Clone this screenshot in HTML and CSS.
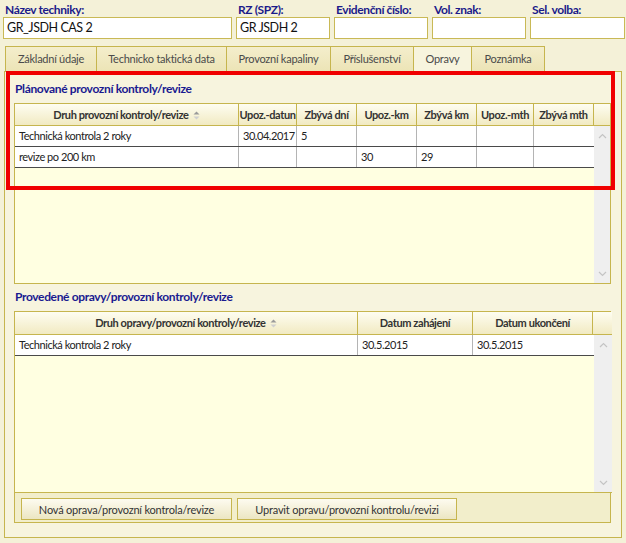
FILE: index.html
```html
<!DOCTYPE html>
<html lang="cs">
<head>
<meta charset="utf-8">
<title>Opravy</title>
<link rel="stylesheet" href="styles.css">
</head>
<body>
<div class="fields">
  <div class="field f-name">
    <label>Název techniky:</label>
    <div class="input">GR_JSDH CAS 2</div>
  </div>
  <div class="field f-small">
    <label>RZ (SPZ):</label>
    <div class="input">GR JSDH 2</div>
  </div>
  <div class="field f-small">
    <label>Evidenční číslo:</label>
    <div class="input"></div>
  </div>
  <div class="field f-small">
    <label>Vol. znak:</label>
    <div class="input"></div>
  </div>
  <div class="field f-last">
    <label>Sel. volba:</label>
    <div class="input"></div>
  </div>
</div>

<div class="tabs">
  <div class="tab t1">Základní údaje</div>
  <div class="tab t2">Technicko taktická data</div>
  <div class="tab t3">Provozní kapaliny</div>
  <div class="tab t4">Příslušenství</div>
  <div class="tab t5 active">Opravy</div>
  <div class="tab t6">Poznámka</div>
</div>

<div class="panel">
  <div class="highlight"></div>
  <h2 class="section-title">Plánované provozní kontroly/revize</h2>
  <div class="grid grid-plan">
    <div class="ghead plan-cols">
      <div class="hc">Druh provozní kontroly/revize <svg class="sort" width="7" height="9" viewBox="0 0 7 9"><path d="M0.5 3.5 L3.5 0.5 L6.5 3.5 Z" fill="#9a9a9a"/><path d="M0.5 5.5 L3.5 8.5 L6.5 5.5 Z" fill="#cfcfcf"/></svg></div>
      <div class="hc">Upoz.-datun</div>
      <div class="hc">Zbývá dní</div>
      <div class="hc">Upoz.-km</div>
      <div class="hc">Zbývá km</div>
      <div class="hc">Upoz.-mth</div>
      <div class="hc">Zbývá mth</div>
      <div class="hc spacer"></div>
    </div>
    <div class="gbody">
      <div class="rows">
        <div class="row plan-cols">
          <div class="c">Technická kontrola 2 roky</div>
          <div class="c">30.04.2017</div>
          <div class="c">5</div>
          <div class="c"></div>
          <div class="c"></div>
          <div class="c"></div>
          <div class="c"></div>
        </div>
        <div class="row plan-cols">
          <div class="c">revize po 200 km</div>
          <div class="c"></div>
          <div class="c"></div>
          <div class="c">30</div>
          <div class="c">29</div>
          <div class="c"></div>
          <div class="c"></div>
        </div>
      </div>
      <div class="scrollbar">
        <svg class="arrow" width="9" height="6" viewBox="0 0 9 6"><path d="M1 5 L4.5 1.5 L8 5" fill="none" stroke="#c4c4c4" stroke-width="1.2"/></svg>
        <svg class="arrow" width="9" height="6" viewBox="0 0 9 6"><path d="M1 1 L4.5 4.5 L8 1" fill="none" stroke="#c4c4c4" stroke-width="1.2"/></svg>
      </div>
    </div>
  </div>

  <h2 class="section-title second">Provedené opravy/provozní kontroly/revize</h2>
  <div class="box-done">
    <div class="grid grid-done">
      <div class="ghead done-cols">
        <div class="hc">Druh opravy/provozní kontroly/revize <svg class="sort" width="7" height="9" viewBox="0 0 7 9"><path d="M0.5 3.5 L3.5 0.5 L6.5 3.5 Z" fill="#9a9a9a"/><path d="M0.5 5.5 L3.5 8.5 L6.5 5.5 Z" fill="#cfcfcf"/></svg></div>
        <div class="hc">Datum zahájení</div>
        <div class="hc">Datum ukončení</div>
        <div class="hc spacer"></div>
      </div>
      <div class="gbody">
        <div class="rows">
          <div class="row done-cols">
            <div class="c">Technická kontrola 2 roky</div>
            <div class="c">30.5.2015</div>
            <div class="c">30.5.2015</div>
          </div>
        </div>
        <div class="scrollbar">
          <svg class="arrow" width="9" height="6" viewBox="0 0 9 6"><path d="M1 5 L4.5 1.5 L8 5" fill="none" stroke="#c4c4c4" stroke-width="1.2"/></svg>
          <svg class="arrow" width="9" height="6" viewBox="0 0 9 6"><path d="M1 1 L4.5 4.5 L8 1" fill="none" stroke="#c4c4c4" stroke-width="1.2"/></svg>
        </div>
      </div>
    </div>
    <div class="buttons">
      <button class="btn b-new">Nová oprava/provozní kontrola/revize</button>
      <button class="btn b-edit">Upravit opravu/provozní kontrolu/revizi</button>
    </div>
  </div>
</div>
</body>
</html>
```

FILE: styles.css
```css
* { box-sizing: border-box; }

html, body {
  margin: 0;
  padding: 0;
  background: #f4f1d8;
}

body {
  font-family: Lato, "Open Sans", sans-serif;
  font-size: 12px;
  color: #222;
  width: 626px;
  height: 543px;
  overflow: hidden;
}

/* ---------- top fields ---------- */
.fields {
  display: flex;
  gap: 4px;
  padding: 3px 0 0 3px;
}
.field { display: flex; flex-direction: column; }
.field label {
  font-weight: bold;
  color: #1b1b8a;
  font-size: 12px;
  letter-spacing: -0.4px;
  line-height: 14px;
  padding-left: 2px;
}
.f-name { width: 229px; }
.f-small { width: 94px; }
.f-last { width: 95px; }
.input {
  height: 22px;
  background: #fff;
  border: 1px solid #c9b956;
  font-size: 12.5px;
  letter-spacing: -0.45px;
  line-height: 20px;
  padding-left: 3px;
  color: #111;
}

/* ---------- tabs ---------- */
.tabs {
  display: flex;
  margin: 7px 0 0 5px;
  height: 25px;
  align-items: flex-end;
}
.tab {
  height: 25px;
  border: 1px solid #c6b54e;
  border-bottom: none;
  border-left: none;
  background: linear-gradient(#f4eecc, #ece4b6);
  color: #4a4a4a;
  font-size: 11px;
  letter-spacing: -0.25px;
  line-height: 24px;
  text-align: center;
}
.tab.t1 { border-left: 1px solid #c6b54e; width: 92px; }
.t2 { width: 130px; }
.t3 { width: 104px; }
.t4 { width: 83px; }
.t5 { width: 59px; }
.t6 { width: 73px; }
.tab.active {
  height: 26px;
  background: #f7f4de;
  position: relative;
  top: 1px;
  border-left: 1px solid #c6b54e;
  margin-left: -1px;
}

/* ---------- panel ---------- */
.panel {
  position: relative;
  margin-left: 4px;
  width: 618px;
  height: 467px;
  border: 1px solid #c6b54e;
  background: #f7f4de;
  padding: 9px 0 0 9px;
}
.highlight {
  position: absolute;
  left: 1px;
  top: -1px;
  width: 609px;
  height: 119px;
  border: 4px solid #f00000;
  pointer-events: none;
  z-index: 5;
}
.section-title {
  margin: 0;
  font-size: 12px;
  letter-spacing: -0.35px;
  line-height: 16px;
  font-weight: bold;
  color: #1a1a90;
  padding-left: 1px;
}
.section-title.second { margin: 5px 0 6px; }

/* ---------- grids ---------- */
.grid {
  width: 597px;
  border: 1px solid #c6b54e;
  background: #ffffe1;
  display: flex;
  flex-direction: column;
}
.grid-plan { height: 181px; margin-top: 6px; }
.grid-done { height: 181px; border: none; border-bottom: 1px solid #c6b54e; }

.plan-cols {
  display: grid;
  grid-template-columns: 224px 58px 60px 60px 60px 57px 60px;
}
.ghead.plan-cols { grid-template-columns: 224px 58px 60px 60px 60px 57px 60px 1fr; }
.done-cols {
  display: grid;
  grid-template-columns: 343px 115px 120px;
}
.ghead.done-cols { grid-template-columns: 343px 115px 120px 1fr; height: 23px; }

.ghead {
  height: 22px;
  background: linear-gradient(#fefdf1, #f1eac2);
  border-bottom: 1px solid #c6b54e;
}
.hc {
  border-right: 1px solid #c6b54e;
  font-weight: bold;
  font-size: 11px;
  letter-spacing: -0.4px;
  color: #333;
  text-align: center;
  line-height: 21px;
  white-space: nowrap;
  overflow: hidden;
}
.hc.spacer { border-right: none; }
.sort {
  vertical-align: -1px;
  margin-left: 2px;
}

.gbody {
  flex: 1;
  display: flex;
}
.rows { width: 579px; }
.row {
  height: 21px;
  background: #fff;
  border-bottom: 1px solid #4a4a4a;
}
.c {
  border-right: 1px solid #b4b4b4;
  font-size: 11px;
  letter-spacing: -0.45px;
  line-height: 20px;
  padding-left: 4px;
  white-space: nowrap;
  overflow: hidden;
  color: #222;
}
.c:last-child { border-right: none; }
.scrollbar {
  flex: 1;
  background: #efefef;
  display: flex;
  flex-direction: column;
  justify-content: space-between;
  align-items: center;
  padding: 7px 0 6px;
}

/* ---------- done box & buttons ---------- */
.box-done {
  width: 597px;
  height: 212px;
  border: 1px solid #c6b54e;
  background: #f2eecb;
  display: flex;
  flex-direction: column;
}
.buttons {
  display: flex;
  gap: 5px;
  padding: 5px 0 0 6px;
}
.btn {
  height: 22px;
  border: 1px solid #c6b54e;
  background: linear-gradient(#fdfbf0, #ece6c2);
  font-family: Lato, "Open Sans", sans-serif;
  font-size: 11px;
  letter-spacing: -0.2px;
  color: #333;
  padding: 0;
}
.b-new { width: 211px; }
.b-edit { width: 220px; }
```
